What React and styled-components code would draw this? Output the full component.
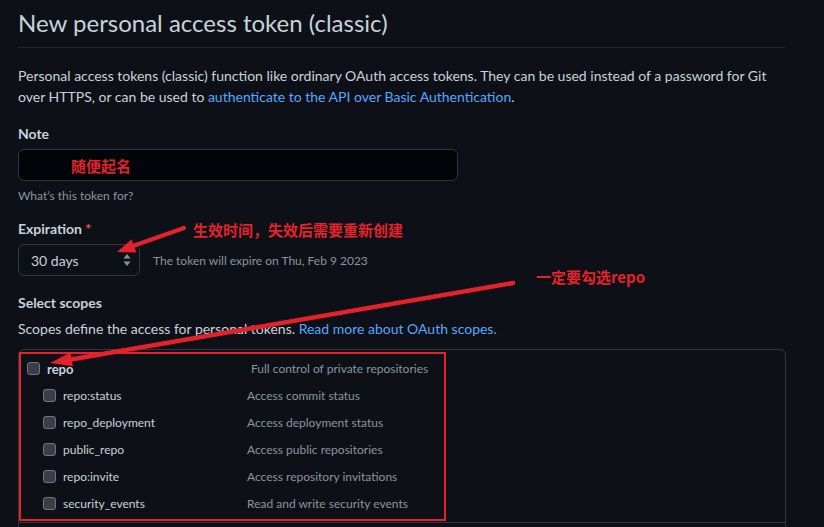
import React from "react";
import styled, { createGlobalStyle } from "styled-components";

const GlobalStyle = createGlobalStyle`
  html, body {
    margin: 0;
    background: #0d1117;
  }
  body {
    font-family: Lato, "Noto Sans CJK SC", sans-serif;
    color: #c9d1d9;
    overflow: hidden;
  }
`;

const scopes = [
  { name: "repo:status", desc: "Access commit status" },
  { name: "repo_deployment", desc: "Access deployment status" },
  { name: "public_repo", desc: "Access public repositories" },
  { name: "repo:invite", desc: "Access repository invitations" },
  { name: "security_events", desc: "Read and write security events" },
];

const App = () => {
  return (
    <Page>
      <GlobalStyle />
      <Header>
        <Title>New personal access token (classic)</Title>
      </Header>
      <Intro>
        Personal access tokens (classic) function like ordinary OAuth access
        tokens. They can be used instead of a password for Git over HTTPS, or
        can be used to <Link>authenticate to the API over Basic Authentication</Link>.
      </Intro>

      <Field>
        <Label>Note</Label>
        <NoteInput readOnly value="随便起名" />
        <Hint>What’s this token for?</Hint>
      </Field>

      <Field>
        <Label>
          Expiration <Required>*</Required>
        </Label>
        <SelectRow>
          <Select>
            <span>30 days</span>
            <svg width="8" height="14" viewBox="0 0 8 14">
              <path d="M4 1 L7.5 5.5 H0.5 Z" fill="#8b949e" />
              <path d="M4 13 L7.5 8.5 H0.5 Z" fill="#8b949e" />
            </svg>
          </Select>
          <SelectNote>The token will expire on Thu, Feb 9 2023</SelectNote>
        </SelectRow>
      </Field>

      <Field>
        <Label>Select scopes</Label>
        <ScopesIntro>
          Scopes define the access for personal tokens.{" "}
          <Link>Read more about OAuth scopes.</Link>
        </ScopesIntro>
      </Field>

      <ScopeBox>
        <ScopeGroup>
          <ScopeRow $parent>
            <Check />
            <ScopeName $parent>repo</ScopeName>
            <ScopeDesc>Full control of private repositories</ScopeDesc>
          </ScopeRow>
          {scopes.map((s) => (
            <ScopeRow key={s.name}>
              <Check />
              <ScopeName>{s.name}</ScopeName>
              <ScopeDesc>{s.desc}</ScopeDesc>
            </ScopeRow>
          ))}
        </ScopeGroup>
      </ScopeBox>

      {/* red annotations drawn over the screenshot */}
      <Note style={{ left: 193, top: 220 }}>生效时间，失效后需要重新创建</Note>
      <Note style={{ left: 536, top: 267 }}>一定要勾选repo</Note>
      <Highlight />
      <Arrows width="824" height="527" viewBox="0 0 824 527">
        <line x1="184" y1="228" x2="130" y2="247" stroke="#e5212b" strokeWidth="4" strokeLinecap="round" />
        <polygon points="117,252 136.4,252.6 131.6,239.4" fill="#e5212b" />
        <line x1="513" y1="283" x2="68" y2="360" stroke="#e5212b" strokeWidth="4.5" strokeLinecap="round" />
        <polygon points="50,363 72.9,366.2 70.5,352.4" fill="#e5212b" />
      </Arrows>
    </Page>
  );
};

export default App;

const Page = styled.div`
  position: relative;
  width: 768px;
  height: 527px;
  padding-left: 18px;
  box-sizing: content-box;
`;
const Header = styled.div`
  padding-top: 8px;
  padding-bottom: 9px;
  border-bottom: 1px solid #21262d;
  margin-bottom: 17px;
`;
const Title = styled.h1`
  margin: 0;
  font-size: 24px;
  font-weight: 400;
  line-height: 30px;
  color: #c9d1d9;
`;
const Intro = styled.p`
  margin: 0 0 16px;
  font-size: 14px;
  line-height: 21px;
`;
const ScopesIntro = styled.div`
  margin: 2px 0 -3px;
  font-size: 14px;
  line-height: 21px;
`;
const Link = styled.a`
  color: #58a6ff;
  text-decoration: none;
`;
const Field = styled.div`
  margin-bottom: 13px;
`;
const Label = styled.div`
  font-size: 14px;
  font-weight: 700;
  line-height: 21px;
  margin-bottom: 5px;
`;
const Required = styled.span`
  color: #f85149;
`;
const NoteInput = styled.input`
  display: block;
  box-sizing: border-box;
  width: 440px;
  height: 32px;
  padding: 0 0 0 52px;
  background: #010409;
  border: 1px solid #30363d;
  border-radius: 6px;
  outline: none;
  color: #e5212b;
  font-family: "Noto Sans CJK SC", sans-serif;
  font-weight: 700;
  font-size: 15px;
`;
const Hint = styled.div`
  margin-top: 6px;
  font-size: 12px;
  line-height: 18px;
  color: #8b949e;
`;
const SelectRow = styled.div`
  display: flex;
  align-items: center;
  gap: 13px;
  padding-bottom: 3px;
`;
const Select = styled.div`
  box-sizing: border-box;
  width: 122px;
  height: 32px;
  padding: 0 8px 0 12px;
  display: flex;
  align-items: center;
  justify-content: space-between;
  border: 1px solid #30363d;
  border-radius: 6px;
  background: #0d1117;
  font-size: 14px;
`;
const SelectNote = styled.span`
  font-size: 12px;
  color: #8b949e;
`;
const ScopeBox = styled.div`
  border: 1px solid #30363d;
  border-radius: 6px;
  height: 300px;
`;
const ScopeGroup = styled.div`
  padding: 5px 0 5px;
  border-bottom: 1px solid #30363d;
`;
const ScopeRow = styled.div`
  display: grid;
  grid-template-columns: ${(p) => (p.$parent ? "20px 204px 1fr" : "20px 184px 1fr")};
  align-items: center;
  height: 27px;
  padding-left: ${(p) => (p.$parent ? "8px" : "24px")};
`;
const Check = styled.span`
  width: 13px;
  height: 13px;
  box-sizing: border-box;
  border: 1px solid #6e7681;
  border-radius: 3px;
  background: #3b3f45;
`;
const ScopeName = styled.span`
  font-size: ${(p) => (p.$parent ? "13px" : "12px")};
  font-weight: ${(p) => (p.$parent ? 700 : 400)};
  color: #c9d1d9;
`;
const ScopeDesc = styled.span`
  font-size: 12px;
  color: #8b949e;
`;
const Note = styled.div`
  position: absolute;
  font-family: "Noto Sans CJK SC", sans-serif;
  font-weight: 700;
  font-size: 15px;
  line-height: 20px;
  color: #e5212b;
  white-space: nowrap;
`;
const Highlight = styled.div`
  position: absolute;
  left: 19px;
  top: 352px;
  width: 427px;
  height: 169px;
  box-sizing: border-box;
  border: 2px solid #e5212b;
`;
const Arrows = styled.svg`
  position: absolute;
  left: 0;
  top: 0;
  pointer-events: none;
`;
